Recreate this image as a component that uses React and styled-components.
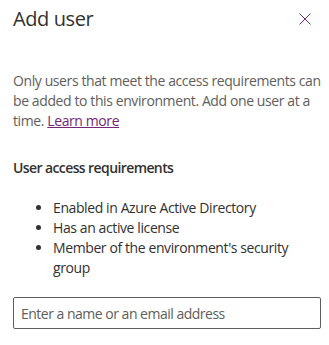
import React from 'react'
import styled, { createGlobalStyle } from 'styled-components'

const GlobalStyle = createGlobalStyle`
  body {
    margin: 0;
    background: #ffffff;
    font-family: "Open Sans", "Noto Sans", sans-serif;
  }
`

const Panel = styled.div`
  width: 329px;
  height: 345px;
  box-sizing: border-box;
  padding: 5px 8px 0 13px;
  background: #ffffff;
  display: flex;
  flex-direction: column;
`

const Header = styled.div`
  display: flex;
  align-items: center;
  justify-content: space-between;
  height: 28px;
`

const Title = styled.h1`
  margin: 0;
  font-size: 20px;
  line-height: 28px;
  font-weight: 400;
  letter-spacing: -0.4px;
  color: #323130;
`

const CloseButton = styled.button`
  border: none;
  background: transparent;
  padding: 0;
  width: 28px;
  height: 28px;
  display: flex;
  align-items: center;
  justify-content: center;
  cursor: pointer;
  margin-right: 2px;
`

const Text = styled.p`
  margin: ${p => p.$top}px 0 0;
  font-size: 14px;
  line-height: 20px;
  letter-spacing: -0.4px;
  color: #605e5c;
`

const Link = styled.a`
  color: #742774;
  text-decoration: underline;
`

const Heading = styled.h2`
  margin: ${p => p.$top}px 0 0;
  font-size: 14px;
  line-height: 20px;
  font-weight: 600;
  letter-spacing: -0.6px;
  color: #323130;
`

const List = styled.ul`
  margin: 20px 0 0;
  padding-left: 40px;
  font-size: 14px;
  line-height: 20px;
  letter-spacing: -0.4px;
  color: #323130;
`

const Item = styled.li``

const Input = styled.input`
  margin-top: 19px;
  width: 308px;
  height: 32px;
  box-sizing: border-box;
  border: 1px solid #605e5c;
  border-radius: 2px;
  padding: 0 7px;
  font-family: inherit;
  font-size: 14px;
  letter-spacing: -0.5px;
  color: #323130;
  &::placeholder {
    color: #605e5c;
  }
`

export default function App() {
  return (
    <>
      <GlobalStyle />
      <Panel>
        <Header>
          <Title>Add user</Title>
          <CloseButton aria-label="Close">
            <svg width="12" height="12" viewBox="0 0 12 12">
              <path d="M0.5 0.5 L11.5 11.5 M11.5 0.5 L0.5 11.5" stroke="#742774" strokeWidth="1" />
            </svg>
          </CloseButton>
        </Header>
        <Text $top={38}>
          Only users that meet the access requirements can be added to this environment. Add one user at a time. <Link href="#">Learn more</Link>
        </Text>
        <Heading $top={27}>User access requirements</Heading>
        <List>
          <Item>Enabled in Azure Active Directory</Item>
          <Item>Has an active license</Item>
          <Item>Member of the environment's security group</Item>
        </List>
        <Input placeholder="Enter a name or an email address" />
      </Panel>
    </>
  )
}
